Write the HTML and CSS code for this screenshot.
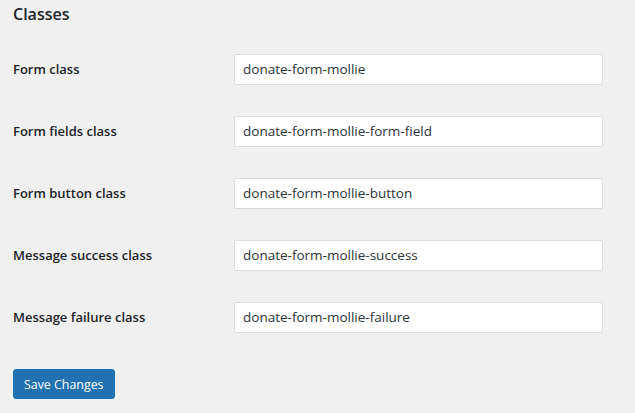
FILE: index.html
```html
<!DOCTYPE html>
<html>
<head>
    <link rel="stylesheet" href="styles.css">
</head>
<body>
    <div id="wrap">
        <h2 class="title">Classes</h2>
        <form class="settings">
            <div class="row">
                <label class="label" for="form-class">Form class</label>
                <input type="text" id="form-class" class="field" value="donate-form-mollie">
            </div>
            <div class="row">
                <label class="label" for="fields-class">Form fields class</label>
                <input type="text" id="fields-class" class="field" value="donate-form-mollie-form-field">
            </div>
            <div class="row">
                <label class="label" for="button-class">Form button class</label>
                <input type="text" id="button-class" class="field" value="donate-form-mollie-button">
            </div>
            <div class="row">
                <label class="label" for="success-class">Message success class</label>
                <input type="text" id="success-class" class="field" value="donate-form-mollie-success">
            </div>
            <div class="row">
                <label class="label" for="failure-class">Message failure class</label>
                <input type="text" id="failure-class" class="field" value="donate-form-mollie-failure">
            </div>
            <div class="submit">
                <button type="button" class="button">Save Changes</button>
            </div>
        </form>
    </div>
</body>
</html>
```

FILE: styles.css
```css
:root {
    --wp-bg: #f0f0f1;
    --wp-text: #1d2327;
    --wp-blue: #2271b1;
    --wp-border: #dcdcde;
}

body {
    margin: 0;
    background: var(--wp-bg);
    color: var(--wp-text);
    font-family: "Open Sans", sans-serif;
    font-size: 14px;
}

#wrap {
    padding: 0 13px;
}

.title {
    font-size: 16px;
    font-weight: 600;
    line-height: 23px;
    margin: 3px 0 12px;
}

.settings {
    display: flex;
    flex-direction: column;
}

.row {
    display: flex;
    align-items: center;
    height: 62px;
}

.label {
    width: 221px;
    flex: 0 0 auto;
    font-weight: 600;
    font-size: 13px;
}

.field {
    width: 369px;
    height: 31px;
    box-sizing: border-box;
    padding: 0 8px;
    border: 1px solid var(--wp-border);
    border-radius: 2px;
    background: white;
    color: #2c3338;
    font-family: inherit;
    font-size: 13.5px;
}

.submit {
    padding-top: 21px;
}

.button {
    height: 30px;
    padding: 0 10px;
    border: 1px solid var(--wp-blue);
    border-radius: 3px;
    background: var(--wp-blue);
    color: white;
    font-family: inherit;
    font-size: 12.4px;
    cursor: pointer;
}
```
